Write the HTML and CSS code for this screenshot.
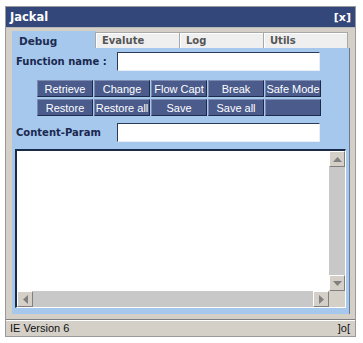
FILE: index.html
```html
<!DOCTYPE html>
<html>
<head>
<meta charset="utf-8">
<link rel="stylesheet" href="styles.css">
</head>
<body>
<div class="window">
  <div class="titlebar"><span class="title">Jackal</span><span class="close">[x]</span></div>
  <div class="tabs">
    <div class="tab active">Debug</div>
    <div class="tab">Evalute</div>
    <div class="tab">Log</div>
    <div class="tab last">Utils</div>
  </div>
  <div class="panel">
    <div class="row">
      <label class="lbl">Function name :</label>
      <div class="input"></div>
    </div>
    <div class="buttons">
      <div class="btn">Retrieve</div>
      <div class="btn">Change</div>
      <div class="btn">Flow Capt</div>
      <div class="btn">Break</div>
      <div class="btn">Safe Mode</div>
      <div class="btn">Restore</div>
      <div class="btn">Restore all</div>
      <div class="btn">Save</div>
      <div class="btn">Save all</div>
      <div class="btn"></div>
    </div>
    <div class="row row2">
      <label class="lbl">Content-Param</label>
      <div class="input"></div>
    </div>
    <div class="textarea">
      <div class="ta-main">
        <div class="ta-content"></div>
        <div class="vscroll">
          <div class="sbtn up"><svg width="9" height="5" viewBox="0 0 9 5"><path d="M0 5 L4.5 0 L9 5Z" fill="#808080"/></svg></div>
          <div class="track"></div>
          <div class="sbtn down"><svg width="9" height="5" viewBox="0 0 9 5"><path d="M0 0 L4.5 5 L9 0Z" fill="#808080"/></svg></div>
        </div>
      </div>
      <div class="hscroll">
        <div class="sbtn left"><svg width="5" height="9" viewBox="0 0 5 9"><path d="M5 0 L0 4.5 L5 9Z" fill="#808080"/></svg></div>
        <div class="htrack"></div>
        <div class="sbtn right"><svg width="5" height="9" viewBox="0 0 5 9"><path d="M0 0 L5 4.5 L0 9Z" fill="#808080"/></svg></div>
        <div class="corner"></div>
      </div>
    </div>
  </div>
  <div class="status"><span>IE Version 6</span><span class="grip">]o[</span></div>
</div>
</body>
</html>
```
FILE: styles.css
```css
html, body { margin: 0; padding: 0; background: #fff; }
body { font-family: "Liberation Sans", Arial, sans-serif; }
.window {
  margin: 6px 0 0 5px;
  width: 349px;
  height: 329px;
  background: #d4d0c8;
  border: 1px solid #9a9a9a;
  display: flex;
  flex-direction: column;
}
.titlebar {
  height: 20px;
  background: #34477a;
  color: #fff;
  font-family: "DejaVu Sans", Verdana, sans-serif;
  font-weight: bold;
  font-size: 11.5px;
  display: flex;
  align-items: center;
  justify-content: space-between;
  padding: 0 4px 0 4px;
  border-bottom: 1px solid #b8b8b8;
}
.close { font-size: 11px; }
.tabs {
  display: flex;
  margin: 4px 0 0 6px;
  height: 16px;
}
.tab {
  width: 77px;
  height: 15px;
  background: #efefef;
  border: 1px solid #a8a8a8;
  border-bottom: none;
  box-shadow: inset 1px 1px 0 #fff;
  font-family: "DejaVu Sans", Verdana, sans-serif;
  font-weight: bold;
  font-size: 10px;
  color: #555;
  padding-left: 6px;
  line-height: 16px;
  box-sizing: content-box;
  margin-right: -1px;
}
.tab.last { width: 77px; }
.tab.active {
  background: #a6c8ec;
  color: #1d2c52;
  font-size: 10.5px;
  width: 76px;
  height: 17px;
  margin-top: -1px;
  line-height: 19px;
  border-color: #a6c8ec;
  box-shadow: none;
}
.panel {
  background: #a6c8ec;
  margin: 0 5px 0 6px;
  height: 262px;
  padding: 4px 3px 0 3px;
  display: flex;
  flex-direction: column;
  border-right: 1px solid #6a7a90;
}
.row {
  display: flex;
  align-items: center;
  height: 19px;
}
.row2 { margin-top: 7px; }
.lbl {
  width: 101px;
  font-family: "DejaVu Sans", Verdana, sans-serif;
  font-weight: bold;
  font-size: 10px;
  color: #1a2850;
  padding-left: 1px;
}
.input {
  width: 201px;
  height: 17px;
  background: #fff;
  border-top: 1px solid #2a3a5a;
  border-left: 1px solid #2a3a5a;
  border-right: 1px solid #e8eef6;
  border-bottom: 1px solid #e8eef6;
}
.buttons {
  display: grid;
  grid-template-columns: repeat(5, 57px);
  grid-auto-rows: 17px;
  gap: 2px 0;
  margin: 9px 0 0 22px;
}
.btn {
  background: #4a5b8c;
  color: #fff;
  font-size: 11px;
  text-align: center;
  line-height: 16px;
  border-top: 1px solid #7a8ab0;
  border-left: 1px solid #7a8ab0;
  border-right: 1px solid #1e2a4a;
  border-bottom: 1px solid #1e2a4a;
  margin-right: 1px;
  white-space: nowrap;
  overflow: hidden;
}
.textarea {
  margin-top: 7px;
  width: 328px;
  height: 156px;
  background: #fff;
  border-top: 2px solid #1a2a4a;
  border-left: 2px solid #1a2a4a;
  border-right: 1px solid #fff;
  border-bottom: 1px solid #fff;
  display: flex;
  flex-direction: column;
}
.ta-main { flex: 1; display: flex; }
.ta-content { flex: 1; }
.vscroll {
  width: 16px;
  display: flex;
  flex-direction: column;
}
.track, .htrack {
  flex: 1;
  background-color: #f0f0f0;
  background-image: radial-gradient(#c8c8c8 0.8px, transparent 0.9px);
  background-size: 2px 2px;
}
.sbtn {
  width: 14px;
  height: 14px;
  background: #d4d0c8;
  border-top: 1px solid #fff;
  border-left: 1px solid #fff;
  border-right: 1px solid #808080;
  border-bottom: 1px solid #808080;
  display: flex;
  align-items: center;
  justify-content: center;
  flex: none;
}
.hscroll { height: 16px; display: flex; }
.corner { width: 16px; background: #d4d0c8; }
.status {
  margin-top: 5px;
  border-top: 1px solid #808080;
  flex: 1;
  display: flex;
  justify-content: space-between;
  align-items: center;
  padding: 0 5px 0 4px;
  font-size: 11px;
  color: #111;
  box-shadow: inset 0 1px 0 #fff;
}
.grip { font-size: 11px; }
```
